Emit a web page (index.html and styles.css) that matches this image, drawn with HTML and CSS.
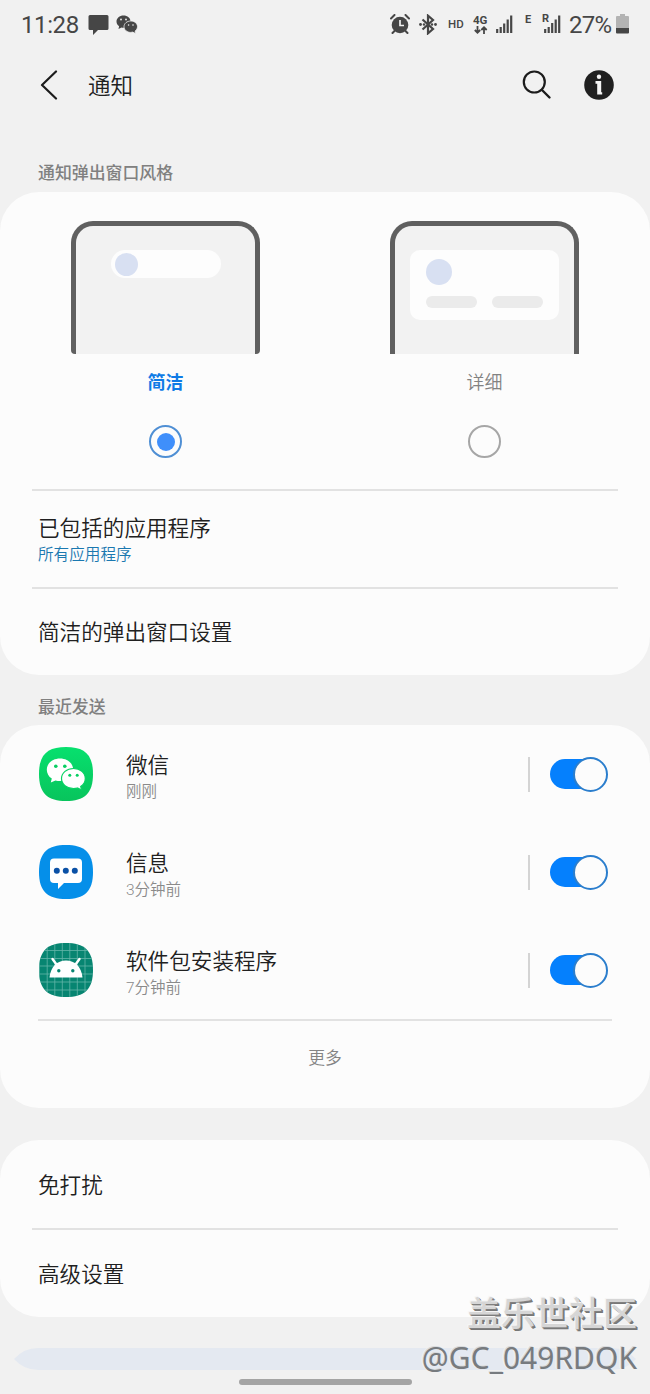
FILE: index.html
```html
<!DOCTYPE html>
<html lang="zh-CN">
<head>
    <meta charset="UTF-8">
    <meta name="viewport" content="width=device-width, initial-scale=1.0">
    <title>通知</title>
    <link rel="stylesheet" href="styles.css">
</head>
<body>

<!-- Barra de estado -->
<div class="status-bar">
    <span class="clock">11:28</span>
    <svg class="icon-chat" width="21" height="21" viewBox="0 0 21 21"><path d="M2 0h17q1.500 0 1.500 1.500v12q0 1.500-1.500 1.500h-9l-5 5v-5h-3q-1.500 0-1.500-1.500v-12q0-1.500 1.500-1.500z" fill="#464646"/></svg>
    <svg class="icon-wechat" width="22" height="19" viewBox="0 0 22 19">
        <path d="M7.500.5C3.500.5.500 3.200.500 6.500c0 2 1 3.700 2.600 4.800L2.500 14l3-1.500c.6.200 1.300.3 2 .3 4 0 7-2.800 7-6.300S11.500.500 7.500.500z" fill="#464646"/>
        <path d="M14.800 6c-3.800 0-6.800 2.500-6.800 5.700s3 5.700 6.800 5.700c.7 0 1.400-.1 2-.3l2.900 1.500-.6-2.600c1.400-1 2.400-2.600 2.400-4.300C21.500 8.500 18.500 6 14.800 6z" fill="#464646" stroke="#f1f1f1" stroke-width=".8"/>
        <g fill="#f1f1f1"><circle cx="5" cy="4.500" r=".9"/><circle cx="10" cy="4.500" r=".9"/><circle cx="12.600" cy="10" r=".8"/><circle cx="17" cy="10" r=".8"/></g>
    </svg>
    <div class="status-right">
        <svg width="20" height="20" viewBox="0 0 20 20">
            <circle cx="10" cy="11" r="8.300" fill="#464646"/>
            <path d="M10 6v5.500h4" fill="none" stroke="#f1f1f1" stroke-width="1.700"/>
            <path d="M1 4.500L4.500 1M19 4.500L15.500 1M4.500 17l-2 2M15.500 17l2 2" stroke="#464646" stroke-width="2" stroke-linecap="round"/>
        </svg>
        <svg class="icon-bluetooth" width="18" height="21" viewBox="0 0 18 21">
            <path d="M3.500 5.500l10.500 9.500-5 4.300V1.700l5 4.300-10.500 9.500" fill="none" stroke="#464646" stroke-width="2.200"/>
            <g fill="#464646"><circle cx="1.500" cy="10.500" r="1.400"/><circle cx="5" cy="10.500" r="1.200"/><circle cx="13" cy="10.500" r="1.200"/><circle cx="16.500" cy="10.500" r="1.400"/></g>
        </svg>
        <span class="hd">HD</span>
        <span class="network">4G
            <svg width="14" height="8" viewBox="0 0 14 8"><path d="M3.500 0v6.500M.8 4l2.700 2.700L6.200 4M10 8V1.500M7.300 4L10 1.300 12.700 4" fill="none" stroke="#464646" stroke-width="1.800"/></svg>
        </span>
        <svg class="signal" width="17" height="18" viewBox="0 0 17 18"><path d="M1.200 18v-4M4.700 18v-6M8.200 18v-9.500M11.700 18V4.500M15.200 18V.5" stroke="#464646" stroke-width="2.200"/></svg>
        <span class="edge">E</span>
        <div class="roaming">
            <svg width="17" height="18" viewBox="0 0 17 18"><path d="M1.200 18v-4M4.700 18v-6M8.200 18v-10M11.700 18V4.500M15.200 18V.5" stroke="#464646" stroke-width="2.200"/></svg>
            <span class="roaming-mark">R</span>
        </div>
        <span class="percent">27%</span>
        <svg class="battery" width="13" height="20" viewBox="0 0 13 20"><path d="M4 0h5v2h3q1 0 1 1v12H0V3q0-1 1-1h3z" fill="#b3b3b3"/><path d="M0 14h13v4.500q0 1-1 1H1q-1 0-1-1z" fill="#464646"/></svg>
    </div>
</div>

<header class="header">
    <svg width="18" height="30" viewBox="0 0 18 30"><path d="M16 1.500L2 15l14 13.500" fill="none" stroke="#1c1c1c" stroke-width="2.200" stroke-linecap="round" stroke-linejoin="round"/></svg>
    <h1>通知</h1>
    <svg class="icon-search" width="30" height="30" viewBox="0 0 30 30"><circle cx="12.300" cy="12" r="10.500" fill="none" stroke="#1c1c1c" stroke-width="2.200"/><path d="M20 20l7.500 7.500" stroke="#1c1c1c" stroke-width="2.400" stroke-linecap="round"/></svg>
    <svg class="icon-info" width="30" height="30" viewBox="0 0 30 30"><circle cx="15" cy="15" r="14.800" fill="#202020"/><circle cx="15" cy="6.800" r="2.200" fill="#f4f4f4"/><path d="M11.500 11h5.700v11.300h1v2.200h-5v-10.700h-1.700z" fill="#f4f4f4"/></svg>
</header>

<h2 class="section-title">通知弹出窗口风格</h2>
<div class="card">
    <!-- Estilo de la ventana emergente -->
    <div class="styles">
        <div class="style-option active">
            <div class="phone phone-brief">
                <div class="popup-brief"><span class="dot"></span></div>
            </div>
            <span class="style-name">简洁</span>
            <span class="radio"></span>
        </div>
        <div class="style-option">
            <div class="phone">
                <div class="popup-detail">
                    <span class="dot"></span>
                    <div class="lines"><span></span><span></span></div>
                </div>
            </div>
            <span class="style-name">详细</span>
            <span class="radio"></span>
        </div>
    </div>
    <div class="row row-apps">
        <span class="row-title">已包括的应用程序</span>
        <span class="row-link">所有应用程序</span>
    </div>
    <div class="row row-popup">
        <span class="row-title">简洁的弹出窗口设置</span>
    </div>
</div>

<h2 class="section-title recent">最近发送</h2>
<div class="card">
    <ul class="app-list">
        <li class="app">
            <svg class="app-icon" width="56" height="56" viewBox="0 0 56 56">
                <defs><linearGradient id="green" x1="0" y1="0" x2="0" y2="1"><stop offset="0" stop-color="#07e06e"/><stop offset="1" stop-color="#08c45c"/></linearGradient></defs>
                <path d="M28 1C46 1 55 8 55 28S46 55 28 55 1 48 1 28 10 1 28 1z" fill="url(#green)"/>
                <path d="M22 12.500c-7.500 0-13.200 4.900-13.200 11.200 0 3.600 1.900 6.800 5 8.900l-1 4 4.700-2.200c1.400.4 2.900.6 4.500.6 7.500 0 13.200-5 13.200-11.300S29.500 12.500 22 12.500z" fill="#fff"/>
                <path d="M35.500 22.500c-6.700 0-12 4.400-12 10s5.300 10 12 10c1.400 0 2.700-.2 3.900-.5l4.300 2-1-3.500c2.800-1.900 4.600-4.700 4.600-8 0-5.600-5.100-10-11.800-10z" fill="#fff" stroke="#08d263" stroke-width="1.200"/>
                <g fill="#08cf63"><circle cx="17.800" cy="20.300" r="1.800"/><circle cx="26.800" cy="20.300" r="1.800"/><circle cx="31.800" cy="29.300" r="1.500"/><circle cx="39.200" cy="29.300" r="1.500"/></g>
            </svg>
            <div class="app-text"><span class="row-title">微信</span><span class="app-time">刚刚</span></div>
            <span class="switch"></span>
        </li>
        <li class="app">
            <svg class="app-icon" width="56" height="56" viewBox="0 0 56 56">
                <path d="M28 1C46 1 55 8 55 28S46 55 28 55 1 48 1 28 10 1 28 1z" fill="#058fe9"/>
                <path d="M16 14.500h24q4 0 4 4v16.500q0 4-4 4H26l-6 6v-6h-4q-4 0-4-4v-16.500q0-4 4-4z" fill="#fff"/>
                <g fill="#0b51a6"><circle cx="18.800" cy="26.700" r="3"/><circle cx="27.800" cy="26.700" r="3"/><circle cx="36.800" cy="26.700" r="3"/></g>
            </svg>
            <div class="app-text"><span class="row-title">信息</span><span class="app-time">3分钟前</span></div>
            <span class="switch"></span>
        </li>
        <li class="app">
            <svg class="app-icon" width="56" height="56" viewBox="0 0 56 56">
                <defs><clipPath id="squircle"><path d="M28 1C46 1 55 8 55 28S46 55 28 55 1 48 1 28 10 1 28 1z"/></clipPath></defs>
                <g clip-path="url(#squircle)">
                    <path d="M0 0h56v56H0z" fill="#078571"/>
                    <path d="M1.500 0v56M9.200 0v56M16.800 0v56M24.300 0v56M31.800 0v56M39.300 0v56M47 0v56M0 8.500h56M0 16.500h56M0 24h56M0 32h56M0 40h56M0 48h56" stroke="#63b5a8" stroke-width=".8"/>
                    <path d="M11.500 35.500C12.500 25 19 18.500 28 18.500S43.500 25 44.500 35.500z" fill="#fff"/>
                    <path d="M18.500 22.500l-4-5.500M37.500 22.500l4-5.500" stroke="#fff" stroke-width="2.400" stroke-linecap="round"/>
                    <circle cx="20.800" cy="28.700" r="1.700" fill="#078571"/><circle cx="34.800" cy="28.700" r="1.700" fill="#078571"/>
                </g>
            </svg>
            <div class="app-text"><span class="row-title">软件包安装程序</span><span class="app-time">7分钟前</span></div>
            <span class="switch"></span>
        </li>
    </ul>
    <div class="more">更多</div>
</div>

<div class="card card-last">
    <div class="row row-dnd"><span class="row-title">免打扰</span></div>
    <div class="row row-advanced"><span class="row-title">高级设置</span></div>
</div>

<svg class="next-card" width="622" height="22" viewBox="0 0 622 22"><path d="M0 11Q10 0 24 0H598Q612 0 622 11Q612 22 598 22H24Q10 22 0 11z" fill="#e4e9f1"/></svg>
<div class="home-bar"></div>

<div class="watermark">
    <span class="watermark-name">盖乐世社区</span>
    <span class="watermark-user">@GC_049RDQK</span>
</div>

</body>
</html>
```
FILE: styles.css
```css
/* General */
*, *::before, *::after {
    margin: 0;
    padding: 0;
    box-sizing: border-box;
}
body {
    position: relative;
    height: 1394px;
    overflow: hidden;
    font-family: Roboto, "Noto Sans CJK SC", sans-serif;
    font-weight: 350;
    background-color: #f1f1f1;
    color: #202020;
}
svg {
    display: block;
    flex-shrink: 0;
}

/* Barra de estado */
.status-bar {
    display: flex;
    align-items: center;
    height: 48px;
    padding: 0 21px;
    color: #464646;
}
.clock {
    width: 58px;
    font-size: 24px;
    font-weight: 400;
    letter-spacing: -0.4px;
    padding-top: 2px;
}
.icon-chat {
    margin-left: 9px;
    margin-top: 2px;
}
.icon-wechat {
    margin-left: 7px;
}
.status-right {
    display: flex;
    align-items: center;
    margin-left: auto;
}
.icon-bluetooth {
    margin-left: 9px;
}
.hd {
    width: 16px;
    margin-left: 11px;
    font-size: 11.5px;
    font-weight: 500;
}
.network {
    width: 16px;
    margin-left: 9px;
    font-size: 11.5px;
    line-height: 11px;
    font-weight: 700;
}
.network svg {
    margin-left: 1px;
}
.signal {
    margin-left: 7px;
}
.edge {
    width: 8px;
    margin: 0 0 10px 12px;
    font-size: 11px;
    line-height: 11px;
    font-weight: 700;
}
.roaming {
    position: relative;
    margin-left: 11px;
}
.roaming-mark {
    position: absolute;
    left: -2px;
    top: -2px;
    font-size: 11px;
    line-height: 11px;
    font-weight: 700;
    background-color: #f1f1f1;
}
.percent {
    width: 44px;
    margin-left: 8px;
    padding-top: 2px;
    font-size: 24px;
    font-weight: 400;
    letter-spacing: -0.7px;
}
.battery {
    margin-left: 3px;
}

/* Cabecera */
.header {
    display: flex;
    align-items: center;
    height: 74px;
    padding: 0 36px 0 40px;
}
.header h1 {
    margin: -3px 0 0 30px;
    font-size: 22.5px;
    font-weight: 350;
}
.icon-search {
    margin-left: auto;
}
.icon-info {
    margin-left: 32px;
}
.section-title {
    height: 70px;
    padding: 39px 38px 0;
    font-size: 16.9px;
    line-height: 24px;
    font-weight: 500;
    color: #808080;
}
.section-title.recent {
    height: 50px;
    padding-top: 20px;
}

/* Tarjetas */
.card {
    background-color: #fcfcfc;
    border-radius: 39px;
}
.styles {
    display: flex;
    justify-content: space-between;
    height: 297px;
    padding: 29px 71px 0;
}
.style-option {
    display: flex;
    flex-direction: column;
    align-items: center;
    width: 189px;
}
.phone {
    width: 189px;
    height: 133px;
    border: 5px solid #606060;
    border-bottom: none;
    border-radius: 22px 22px 0 0;
    background-color: #f2f2f2;
    padding: 24px 15px 0;
}
.phone-brief {
    padding-left: 35px;
    border-radius: 22px 22px 4px 4px;
}
.popup-brief {
    width: 110px;
    height: 28px;
    padding: 3px 4px;
    border-radius: 14px;
    background-color: #fdfdfd;
}
.dot {
    display: block;
    width: 23px;
    height: 23px;
    border-radius: 50%;
    background-color: #d8e0f2;
}
.popup-detail {
    width: 149px;
    height: 70px;
    padding: 9px 16px;
    border-radius: 10px;
    background-color: #fdfdfd;
}
.popup-detail .dot {
    width: 26px;
    height: 26px;
}
.lines {
    display: flex;
    justify-content: space-between;
    margin-top: 11px;
}
.lines span {
    width: 51px;
    height: 12px;
    border-radius: 6px;
    background-color: #ebebeb;
}
.style-name {
    margin-top: 16px;
    font-size: 18px;
    line-height: 26px;
    color: #828282;
}
.active .style-name {
    color: #0f7be6;
    font-weight: 700;
}
.radio {
    display: flex;
    align-items: center;
    justify-content: center;
    width: 33px;
    height: 33px;
    margin-top: 29px;
    border: 2px solid #a6a6a6;
    border-radius: 50%;
}
.active .radio {
    border-color: #4f8fd4;
}
.active .radio::after {
    content: "";
    width: 18px;
    height: 18px;
    border-radius: 50%;
    background-color: #3f8ffb;
}
.row {
    margin: 0 32px;
    padding-left: 6px;
}
.row-title {
    display: block;
    font-size: 21.6px;
    line-height: 30px;
}
.row-apps {
    height: 98px;
    padding-top: 23px;
    border-top: 2px solid #e2e2e2;
}
.row-link {
    display: block;
    font-size: 15.6px;
    line-height: 22px;
    color: #1a78b0;
}
.row-popup {
    height: 88px;
    padding-top: 29px;
    border-top: 2px solid #e2e2e2;
}

/* Lista de aplicaciones */
.app-list {
    height: 294px;
    list-style-type: none;
}
.app {
    display: flex;
    align-items: center;
    height: 98px;
    padding: 0 42px 0 38px;
}
.app-text {
    flex-grow: 1;
    margin-left: 32px;
    padding-top: 6px;
}
.app-time {
    display: block;
    font-size: 15.5px;
    line-height: 22px;
    color: #8a8a8a;
}
.switch {
    display: flex;
    align-items: center;
    position: relative;
    width: 80px;
    height: 35px;
    padding-left: 20px;
    border-left: 2px solid #d4d4d4;
}
.switch::before {
    content: "";
    width: 50px;
    height: 30px;
    border-radius: 15px;
    background-color: #0580fd;
}
.switch::after {
    content: "";
    position: absolute;
    right: 0;
    top: 0;
    width: 35px;
    height: 35px;
    border: 2px solid #2b7ecd;
    border-radius: 50%;
    background-color: #fcfcfc;
}
.more {
    height: 89px;
    margin: 0 38px;
    padding-top: 25px;
    border-top: 2px solid #e2e2e2;
    text-align: center;
    font-size: 16.8px;
    line-height: 24px;
    color: #848484;
}
.card-last {
    margin-top: 32px;
}
.row-dnd {
    height: 88px;
    padding-top: 31px;
}
.row-advanced {
    height: 89px;
    padding-top: 30px;
    border-top: 2px solid #e2e2e2;
}

/* Parte inferior */
.next-card {
    margin: 31px auto 0;
}
.home-bar {
    width: 173px;
    height: 6px;
    margin: 9px auto 0;
    border-radius: 3px;
    background-color: #a4a4a4;
}
.watermark {
    position: absolute;
    right: 13px;
    bottom: 15px;
    display: flex;
    flex-direction: column;
    align-items: flex-end;
    color: #d6d6d6;
}
.watermark-name {
    font-size: 34px;
    line-height: 46px;
    font-weight: 500;
    text-shadow: -1px -1px 0 #f6f6f6, 1px 1px 0 #808080, 2px 2px 0 #777;
}
.watermark-user {
    font-family: "Noto Sans", sans-serif;
    font-size: 30px;
    line-height: 42px;
    font-weight: 400;
    color: #777b7f;
    text-shadow: -1px -1px 0 #d8dadc, -2px -1px 0 #f4f4f4;
}
```
